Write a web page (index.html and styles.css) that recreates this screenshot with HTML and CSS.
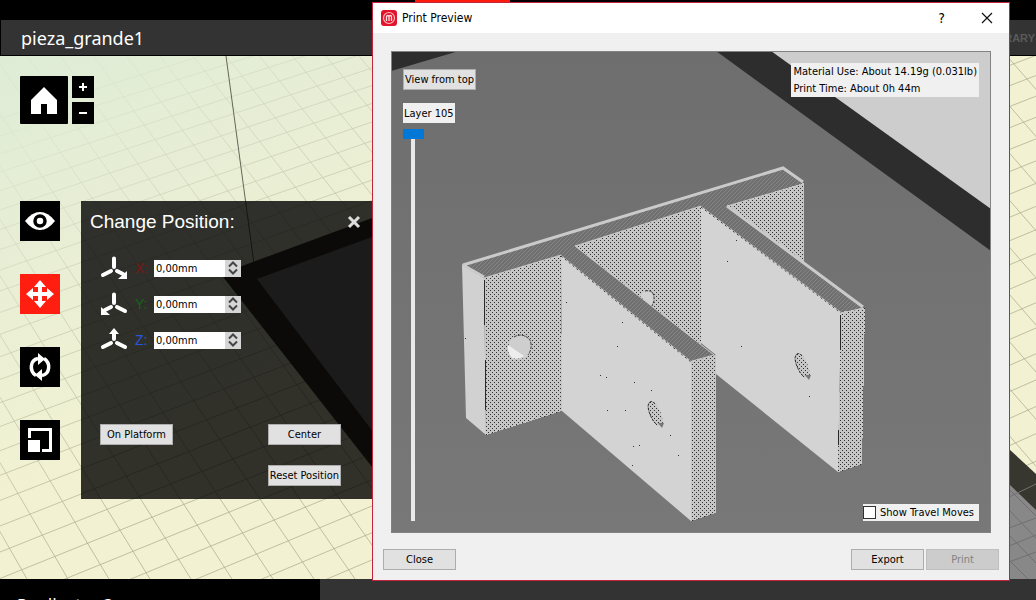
FILE: index.html
```html
<!DOCTYPE html>
<html lang="en">
<head>
<meta charset="utf-8">
<title>Print Preview</title>
<link rel="stylesheet" href="styles.css">
</head>
<body>
<div class="app">
  <header class="header">
    <div class="tabs"><span class="tab-active"></span></div>
    <div class="file-bar"><h1 class="file-name">pieza_grande1</h1><span class="library">LIBRARY</span></div>
  </header>
  <main class="stage">
    <svg class="scene" viewBox="0 56 1036 523" preserveAspectRatio="xMinYMin slice" aria-hidden="true">
      <defs>
        <linearGradient id="fade" gradientUnits="userSpaceOnUse" x1="40" y1="120" x2="250" y2="440">
          <stop offset="0" stop-color="#fff" stop-opacity="0.1"/><stop offset="1" stop-color="#fff"/>
        </linearGradient>
        <mask id="gridMask" maskUnits="userSpaceOnUse" x="0" y="56" width="1036" height="523"><rect y="56" width="1036" height="523" fill="url(#fade)"/></mask>
      </defs>
      <g mask="url(#gridMask)"><path id="grid" class="grid"/></g>
      <path class="axis" d="M226 56L254 264"/>
      <path fill="#37362f" d="M223 277L242 266L372 218H1009V449L1036 474V579H460Z"/>
      <path fill="#888" d="M257 279L372 237H1009V484L1036 510V579H485Z"/>
      <path class="plate-grid" d="M1009 497L1036 484M1009 528L1036 518M1009 562L1036 552M1009 510L1036 538M1009 535L1036 563M1009 546L1036 535M1009 560L1028 579M1009 489L1036 516"/>
    </svg>
    <div class="view-tools">
      <button class="tool home" aria-label="Home view"><svg viewBox="0 0 48 48"><path fill="#fff" d="M24 11L37 24V38H27V28H21V38H11V24Z"/></svg></button>
      <div class="zoom-tools">
        <button class="tool small" aria-label="Zoom in"><svg viewBox="0 0 22 22"><path fill="#fff" d="M10 7h2v3h3v2h-3v3h-2v-3H7v-2h3z"/></svg></button>
        <button class="tool small" aria-label="Zoom out"><svg viewBox="0 0 22 22"><path fill="#fff" d="M7 10h8v2H7z"/></svg></button>
      </div>
    </div>
    <div class="work">
      <nav class="side-tools">
        <button class="tool" aria-label="View"><svg viewBox="0 0 40 40"><path fill="#fff" d="M5 20Q12 11 20 11Q28 11 35 20Q28 29 20 29Q12 29 5 20Z"/><circle cx="20" cy="20" r="5" fill="none" stroke="#000" stroke-width="3.5"/></svg></button>
        <button class="tool active" aria-label="Move"><svg viewBox="0 0 40 40"><path fill="#fff" d="M20 6l6 7h-4v5h5V14l7 6-7 6v-4h-5v5h4l-6 7-6-7h4v-5h-5v4l-7-6 7-6v4h5v-5h-4z"/></svg></button>
        <button class="tool" aria-label="Turn"><svg viewBox="0 0 40 40"><g fill="none" stroke="#fff" stroke-width="3.500"><path d="M16 28.500C9 24 10 13 18 11.500"/><path d="M24 11.500C31 16 30 27 22 28.500"/></g><path fill="#fff" d="M18 6l7 6-7 6zM22 22v12l-7-6z"/></svg></button>
        <button class="tool" aria-label="Scale"><svg viewBox="0 0 40 40"><path fill="none" stroke="#fff" stroke-width="3" d="M9.500 18V9.500H30.500V30.500H22"/><path fill="#fff" d="M8 20h12v12H8z"/></svg></button>
      </nav>
      <section class="panel">
        <div class="panel-head">
          <h2 class="panel-title">Change Position:</h2>
          <button class="panel-close" aria-label="Close panel"><svg viewBox="0 0 14 14"><path d="M2 2L12 12M12 2L2 12" stroke="#ddd" stroke-width="3"/></svg></button>
        </div>
        <div class="axes">
          <div class="axis-row">
            <svg class="axis-icon" viewBox="0 0 28 24"><path class="arm" d="M14 2.500V11M11 15L3 19M17 15L23 18"/><path fill="#fff" d="M27 15V23H18Z"/></svg>
            <label class="axis-label x" for="px">X:</label>
            <div class="spin"><input id="px" class="spin-input" value="0,00mm"><div class="steps"><button class="step" aria-label="X up"><svg viewBox="0 0 16 8"><path d="M4 6.500L8 2.500L12 6.500"/></svg></button><button class="step" aria-label="X down"><svg viewBox="0 0 16 8"><path d="M4 1.500L8 5.500L12 1.500"/></svg></button></div></div>
          </div>
          <div class="axis-row">
            <svg class="axis-icon" viewBox="0 0 28 24"><path class="arm" d="M14 2.500V11M17 15L25 19M11 15L5 18"/><path fill="#fff" d="M1 15V23H10Z"/></svg>
            <label class="axis-label y" for="py">Y:</label>
            <div class="spin"><input id="py" class="spin-input" value="0,00mm"><div class="steps"><button class="step" aria-label="Y up"><svg viewBox="0 0 16 8"><path d="M4 6.500L8 2.500L12 6.500"/></svg></button><button class="step" aria-label="Y down"><svg viewBox="0 0 16 8"><path d="M4 1.500L8 5.500L12 1.500"/></svg></button></div></div>
          </div>
          <div class="axis-row">
            <svg class="axis-icon" viewBox="0 0 28 24"><path class="arm" d="M14 5V11M11 15L3 19M17 15L25 19"/><path fill="#fff" d="M14 0L19 6H9Z"/></svg>
            <label class="axis-label z" for="pz">Z:</label>
            <div class="spin"><input id="pz" class="spin-input" value="0,00mm"><div class="steps"><button class="step" aria-label="Z up"><svg viewBox="0 0 16 8"><path d="M4 6.500L8 2.500L12 6.500"/></svg></button><button class="step" aria-label="Z down"><svg viewBox="0 0 16 8"><path d="M4 1.500L8 5.500L12 1.500"/></svg></button></div></div>
          </div>
        </div>
        <div class="panel-actions">
          <div class="action-row"><button class="btn">On Platform</button><button class="btn">Center</button></div>
          <div class="action-row end"><button class="btn">Reset Position</button></div>
        </div>
      </section>
    </div>
  </main>
  <footer class="footer"><div class="machine">Replicator 2</div></footer>

  <section class="dialog" role="dialog" aria-labelledby="dlg-title">
    <div class="title-bar">
      <svg class="logo" viewBox="0 0 16 16" aria-hidden="true"><rect width="16" height="16" rx="3" fill="#e2142d"/><circle cx="8" cy="8" r="5.500" fill="none" stroke="#fbb" stroke-width="1.200"/><path d="M5.500 11V7Q5.500 5.500 6.800 5.500Q8 5.500 8 7V11M8 7Q8 5.500 9.300 5.500Q10.500 5.500 10.500 7V11" fill="none" stroke="#fdd" stroke-width="1.300"/></svg>
      <h2 class="dialog-title" id="dlg-title">Print Preview</h2>
      <button class="win-btn" aria-label="Help">?</button>
      <button class="win-btn" aria-label="Close window"><svg viewBox="0 0 12 12"><path d="M1 1L11 11M11 1L1 11" stroke="#111" stroke-width="1.200"/></svg></button>
    </div>
    <div class="dialog-body">
      <div class="preview">
        <svg class="model" viewBox="392 52 598 480" preserveAspectRatio="xMinYMin slice" aria-hidden="true">
          <defs>
            <linearGradient id="bed" x1="0" y1="0" x2="0" y2="1"><stop offset="0" stop-color="#6e6e6e"/><stop offset="1" stop-color="#787878"/></linearGradient>
            <pattern id="dots" width="4" height="4" patternUnits="userSpaceOnUse"><rect width="4" height="4" fill="#c6c6c6"/><path fill="#303030" d="M0 0h1v1H0zM2 2h1v1H2z"/></pattern>
            <pattern id="hatch" width="4" height="4" patternUnits="userSpaceOnUse"><rect width="4" height="4" fill="#707070"/><path fill="#858585" d="M3 0h1v1H3zM2 1h1v1H2zM1 2h1v1H1zM0 3h1v1H0z"/></pattern>
          </defs>
          <path fill="url(#bed)" d="M391 51H991V533H391Z"/>
          <path fill="#2d2d2d" d="M391 51H459L391 71ZM716 51H991V251Z"/>
          <path fill="#cdcdcd" d="M771 51H991V209Z"/>
          <path fill="url(#hatch)" d="M462 264L783 167L804 183L727 206L865 308L841 312L701 206L575 246L715 355L691 361L561 255L484 278Z"/>
          <path fill="#d1d1d1" d="M462 264L484 278L486 435L466 418Z"/>
          <path fill="url(#dots)" shape-rendering="crispEdges" d="M484 278L561 255L562 411L486 435ZM575 246L701 206V345ZM727 206L804 183V262Z"/>
          <path fill="#d3d3d3" d="M701 206L841 312L838 472L716 374V355L701 343ZM561 255L691 361V521L562 411Z"/>
          <path fill="url(#dots)" shape-rendering="crispEdges" d="M691 361L716 355V513L691 521ZM841 312L865 308L862 464L838 472Z"/>
          <path class="rim" d="M463 265L783 168L803 182M463 265L484 277M727 206L863 307"/>
          <path class="rim fine" d="M575 246L714 355L692 361M863 308L842 313M484 278L561 255M575 246L701 206M727 206L803 184"/>
          <path class="rough" d="M561 256L691 362M701 207L841 313"/>
          <path stroke="#292929" fill="none" d="M484.500 280V325M485.500 360V410M840.500 315V350M838.500 430V445"/>
          <circle cx="520" cy="347" r="11.500" fill="#cecece"/>
          <path fill="#ededed" d="M508 345L524 356Q518 360 512 358Q507 353 508 345Z"/>
          <path class="hole-line" d="M514 337Q523 332 530 340Q533 348 528 355"/>
          <path fill="#d2d2d2" d="M640 296Q646 287 653 293Q657 301 652 306Z"/>
          <path class="hole-line" d="M645 291Q655 289 654 301L652 306"/>
          <g id="hole"><path fill="url(#dots)" d="M648 403Q650 399 655 403Q662 411 663 424Q660 427 656 425Q647 414 648 403Z"/><path class="hole-line" d="M655 404Q650 398 648 406Q649 417 657 425"/><path fill="#777" d="M658 423h6l-2 5z"/></g>
          <use href="#hole" x="147" y="-48"/>
          <path fill="#333" d="M617 346h1v1h-1zM600 375h1v1h-1zM606 377h1v1h-1zM634 382h1v1h-1zM651 390h1v1h-1zM607 410h1v1h-1zM625 410h1v1h-1zM633 446h1v1h-1zM639 445h1v1h-1zM632 465h1v1h-1zM670 435h1v1h-1zM678 455h1v1h-1zM736 240h1v1h-1zM727 261h1v1h-1zM741 346h1v1h-1zM809 396h1v1h-1zM566 302h1v1h-1zM622 322h1v1h-1zM465 338h1v1h-1z"/>
        </svg>
        <div class="preview-left">
          <button class="btn">View from top</button>
          <label class="layer" for="layer">Layer 105</label>
          <input class="slider" id="layer" type="range" min="1" max="105" value="105">
        </div>
        <div class="preview-right">
          <div class="estimate"><div>Material Use: About 14.19g (0.031lb)</div><div>Print Time: About 0h 44m</div></div>
          <label class="travel"><input class="check" type="checkbox">Show Travel Moves</label>
        </div>
      </div>
      <div class="dialog-actions">
        <button class="btn">Close</button><span class="spacer"></span><button class="btn">Export</button><button class="btn" disabled>Print</button>
      </div>
    </div>
  </section>
</div>
<script src="grid.js"></script>
</body>
</html>
```
FILE: grid.js
```js
const parts = [];
for (let i = -4; i < 34; i++) {
  const y = 68 + i * 17.3 + i * i * 0.23;
  const slope = 0.33 + i * 0.0043;
  parts.push(`M0 ${y + 372 * slope}L1036 ${y - 664 * slope}`);
}
for (let k = -8; k < 42; k++) {
  const x = 27 + k * 41;
  const run = 0.57 + Math.min(k, 20) * 0.015;
  parts.push(`M${x - 523 * run} 56L${x} 579`);
}
document.getElementById("grid").setAttribute("d", parts.join(""));
```
FILE: styles.css
```css
* { box-sizing: border-box; }
body { margin: 0; font: 11px/17px "DejaVu Sans Condensed", "Liberation Sans", sans-serif; color: #000; }
h1, h2 { margin: 0; font-weight: 400; }
button, input { font: inherit; color: inherit; margin: 0; }
button { padding: 0; border: 0; }
svg { display: block; }
.app { position: relative; height: 100vh; display: flex; flex-direction: column; overflow: hidden; background: #000; }
.header { display: flex; flex-direction: column; }
.tabs { height: 20px; padding-left: 415px; }
.tab-active { display: block; width: 95px; height: 3px; background: #ff1b0c; }
.file-bar { height: 36px; margin-left: 1px; padding: 0 1px 0 20px; display: flex; align-items: center; justify-content: space-between; background: #333; border-bottom: 1px solid #000; color: #fff; }
.file-name { font-family: "Noto Sans", sans-serif; font-size: 18px; line-height: 24px; }
.library { font: bold 11px/16px "Liberation Sans", sans-serif; color: #5a5a5a; }
.stage { position: relative; flex: 1; padding: 20px; overflow: hidden; background: linear-gradient(155deg, #deecd6 0, #e8eed5 20%, #f2f2d2 45%); }
.scene { position: absolute; inset: 0; width: 100%; height: 100%; }
.grid { fill: none; stroke: #aaa88b; stroke-width: 1; opacity: 0.7; }
.axis { stroke: #666656; stroke-width: 1; }
.plate-grid { stroke: #707070; }
.view-tools, .work { position: relative; display: flex; }
.view-tools { gap: 4px; }
.zoom-tools { display: flex; flex-direction: column; gap: 4px; }
.tool { display: block; width: 40px; height: 40px; background: #000; }
.tool.home { width: 48px; height: 48px; border-radius: 1px; }
.tool.small { width: 22px; height: 22px; }
.tool.active { background: #ff1e0f; }
.work { margin-top: 77px; gap: 21px; }
.side-tools { display: flex; flex-direction: column; gap: 33px; }
.panel { width: 300px; height: 298px; padding: 8px 20px 13px 9px; background: rgba(0, 0, 0, 0.8); display: flex; flex-direction: column; }
.panel-head { display: flex; justify-content: space-between; align-items: center; color: #fff; padding-bottom: 22px; }
.panel-title { font: 19px/25px "Liberation Sans", sans-serif; }
.panel-close { width: 14px; height: 14px; background: none; }
.axes { display: flex; flex-direction: column; gap: 12px; padding-left: 10px; }
.axis-row { display: flex; align-items: center; height: 24px; }
.axis-icon { width: 28px; height: 24px; }
.arm { fill: none; stroke: #fff; stroke-width: 4; stroke-linecap: round; }
.axis-label { width: 26px; padding-left: 7px; font: 14px/20px "Liberation Sans", sans-serif; }
.axis-label.x { color: #7b1713; }
.axis-label.y { color: #17641d; }
.axis-label.z { color: #2457e0; }
.spin { display: flex; width: 87px; height: 17px; background: #fff; }
.spin-input { flex: 1; min-width: 0; border: 0; padding: 1px 2px; background: none; }
.steps { width: 16px; display: flex; flex-direction: column; background: #d6d6d6; }
.step { flex: 1; background: none; }
.step svg { width: 16px; height: 8px; fill: none; stroke: #444; stroke-width: 2; }
.panel-actions { margin-top: auto; padding: 0 20px 0 10px; display: flex; flex-direction: column; gap: 20px; }
.action-row { display: flex; justify-content: space-between; }
.action-row.end { justify-content: flex-end; }
.btn { min-width: 73px; height: 21px; padding: 0 1px; line-height: 19px; text-align: center; background: #e1e1e1; border: 1px solid #adadad; white-space: nowrap; }
.btn:disabled { background: #ccc; border-color: #bfbfbf; color: #838383; }
.footer { height: 21px; background: #333; overflow: hidden; }
.machine { width: 320px; height: 48px; padding: 15px 17px; background: #000; color: #fff; font-size: 18px; line-height: 24px; }
.dialog { position: absolute; top: 2px; left: 372px; right: 26px; bottom: 19px; display: flex; flex-direction: column; background: #f0f0f0; border: 1px solid #c3243b; }
.title-bar { height: 30px; padding-left: 8px; display: flex; align-items: center; background: #fff; }
.logo { width: 16px; height: 16px; margin-right: 5px; }
.dialog-title { flex: 1; font-size: 12px; line-height: 16px; }
.win-btn { width: 45px; height: 29px; background: none; font: 14px/29px "DejaVu Sans Condensed", sans-serif; }
.win-btn svg { width: 12px; height: 12px; margin: auto; }
.dialog-body { flex: 1; display: flex; flex-direction: column; padding: 18px 10px 10px; }
.preview { position: relative; flex: 1; margin: 0 8px; padding: 11px; display: flex; justify-content: space-between; border: 1px solid #828282; overflow: hidden; }
.model { position: absolute; inset: 0; width: 100%; height: 100%; }
.rim { fill: none; stroke: #cacaca; stroke-width: 3; }
.rim.fine { stroke-width: 1; }
.rough { fill: none; stroke: #3d3d3d; stroke-width: 1; stroke-dasharray: 2 3; }
.hole-line { fill: none; stroke: #333; stroke-width: 1; stroke-dasharray: 3 1; }
.preview-left, .preview-right { position: relative; display: flex; flex-direction: column; }
.preview-left { align-items: flex-start; padding-top: 6px; }
.layer { height: 20px; margin-top: 13px; padding: 0 1px; line-height: 21px; background: #f0f0f0; }
.slider { appearance: none; writing-mode: vertical-lr; direction: rtl; width: 21px; flex: 1; min-height: 0; margin: 6px 0 0; background: linear-gradient(#e9e9e9, #e9e9e9) 8px 0 / 4px 100% no-repeat; }
.slider::-webkit-slider-thumb { appearance: none; width: 21px; height: 10px; background: #0078d7; }
.preview-right { justify-content: space-between; align-items: flex-end; }
.estimate { padding: 0 2px; background: #f0f0f0; }
.travel { display: flex; align-items: center; gap: 4px; height: 17px; padding-right: 5px; background: #f0f0f0; }
.check { appearance: none; width: 13px; height: 13px; border: 1px solid #333; background: #fff; }
.dialog-actions { display: flex; gap: 2px; margin-top: 16px; }
.spacer { flex: 1; }
```
